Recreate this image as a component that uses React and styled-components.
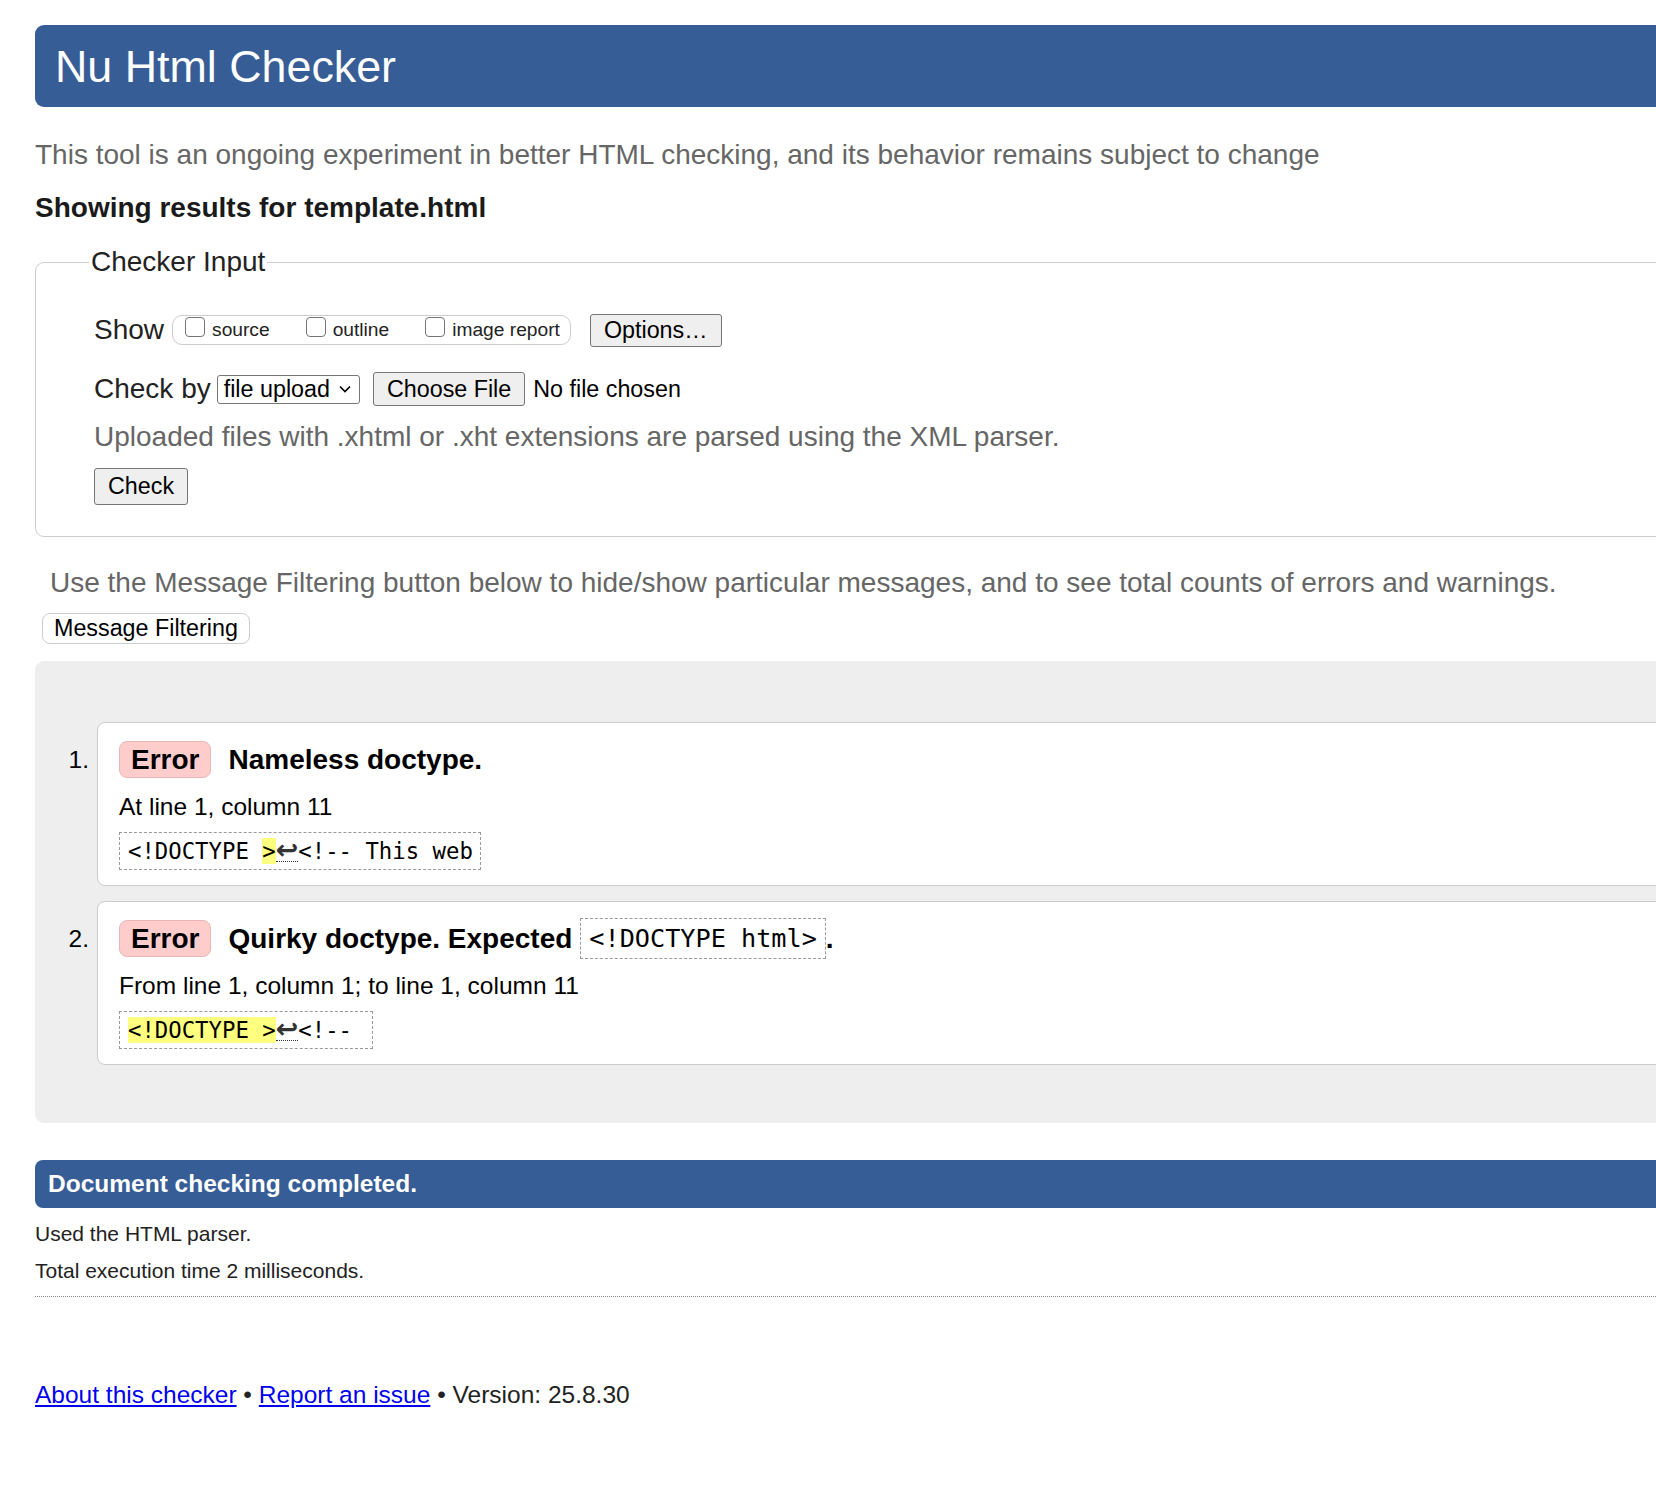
import React from 'react';
import styled, { createGlobalStyle } from 'styled-components';

const GlobalStyle = createGlobalStyle`
  html, body {
    margin: 0;
    padding: 0;
    background: #fff;
  }

  body {
    overflow-x: hidden;
    font-family: "Liberation Sans", Arial, sans-serif;
    font-size: 28px;
    color: #222;
  }
`;

const Page = styled.div`
  padding: 25px 0 60px 35px;
  margin-right: -80px;
`;

const Header = styled.h1`
  margin: 0;
  height: 82px;
  padding: 0 20px;
  line-height: 82px;
  font-size: 44.8px;
  font-weight: 400;
  color: #fff;
  background: #365d95;
  border-radius: 9px;
`;

const Note = styled.p`
  margin: ${(p) => p.$top || 0}px 0 0;
  padding-left: ${(p) => p.$indent || 0}px;
  line-height: 32px;
  color: #666;
`;

const Subtitle = styled.h2`
  margin: 21px 0 0;
  font-size: 28px;
  line-height: 32px;
  font-weight: 700;
  color: #1a1a1a;
`;

const Fieldset = styled.fieldset`
  margin: 22px 0 0;
  padding: 0 0 32px 58px;
  min-width: 0;
  border: 1px solid #ccc;
  border-radius: 9px;
`;

const Legend = styled.legend`
  margin-left: -5px;
  padding: 0 2px;
  line-height: 32px;
  color: #222;
`;

const Row = styled.div`
  display: flex;
  align-items: center;
  height: 36px;
  margin-top: ${(p) => p.$top}px;
`;

const Label = styled.span`
  margin-right: ${(p) => p.$gap || 0}px;
  line-height: 32px;
`;

const OptionGroup = styled.div`
  display: flex;
  align-items: center;
  height: 28px;
  padding: 0 10px 0 12px;
  gap: 36px;
  border: 1px solid #ccc;
  border-radius: 10px;
`;

const Option = styled.label`
  display: flex;
  align-items: center;
  gap: 7px;
  font-size: 19.2px;
  color: #222;
`;

const Box = styled.input.attrs({ type: 'checkbox' })`
  appearance: none;
  margin: 0 0 6px;
  width: 20px;
  height: 20px;
  border: 1.5px solid #767676;
  border-radius: 4px;
  background: #fff;
`;

const Button = styled.button`
  height: ${(p) => p.$h || 34}px;
  margin-left: ${(p) => p.$left || 0}px;
  padding: 0 13px;
  font-family: "Liberation Sans", Arial, sans-serif;
  font-size: 23.3px;
  color: #000;
  background: #efefef;
  border: 1px solid #767676;
  border-radius: 3px;
`;

const Select = styled.div`
  display: flex;
  align-items: center;
  gap: 9px;
  height: 29px;
  margin-left: 6px;
  padding: 0 8px 0 6px;
  box-sizing: border-box;
  font-size: 23.3px;
  color: #000;
  border: 1px solid #767676;
  border-radius: 3px;
  background: #fff;
`;

const FileNote = styled.span`
  margin-left: 8px;
  font-size: 23.3px;
  color: #000;
`;

const FilterButton = styled.button`
  display: block;
  height: 31px;
  margin: 14px 0 0 7px;
  padding: 0 11px;
  font-family: "Liberation Sans", Arial, sans-serif;
  font-size: 23.3px;
  color: #000;
  background: #fff;
  border: 1px solid #ccc;
  border-radius: 8px;
`;

const Results = styled.div`
  margin-top: 17px;
  padding: 61px 0 58px;
  background: #eee;
  border-radius: 9px;
`;

const Item = styled.div`
  display: flex;
  align-items: flex-start;
  margin-top: ${(p) => (p.$first ? 0 : 15)}px;
`;

const Number = styled.span`
  width: 54px;
  margin-right: 8px;
  padding-top: 23px;
  text-align: right;
  font-size: 24.5px;
  line-height: 30px;
  color: #000;
`;

const Card = styled.div`
  flex: 1;
  padding: 18px 0 15px 21px;
  background: #fff;
  border: 1px solid #ccc;
  border-radius: 8px;
  color: #000;
`;

const TitleRow = styled.div`
  display: flex;
  align-items: center;
  height: 37px;
`;

const Badge = styled.span`
  height: 35px;
  padding: 0 11px;
  line-height: 35px;
  font-weight: 700;
  background: #fcc;
  border: 1px solid #e6b8b8;
  border-radius: 8px;
`;

const Message = styled.span`
  margin-left: ${(p) => (p.$tight ? 0 : 17)}px;
  font-weight: 700;
  white-space: pre;
`;

const InlineCode = styled.code`
  margin-left: 8px;
  padding: 4px 8px;
  font-family: "DejaVu Sans Mono", monospace;
  font-size: 25.2px;
  font-weight: 400;
  line-height: 31px;
  border: 1px dashed #999;
`;

const Location = styled.div`
  margin-top: 14px;
  font-size: 24.5px;
  line-height: 30px;
`;

const Extract = styled.code`
  display: inline-block;
  margin-top: 10px;
  padding: 4px 7px 4px 8px;
  font-family: "DejaVu Sans Mono", monospace;
  font-size: 22.3px;
  line-height: 28px;
  white-space: pre;
  border: 1px dashed #999;
`;

const Mark = styled.mark`
  color: inherit;
  background: #ffff80;
`;

const LineFeed = styled.span`
  display: inline-block;
  line-height: 22px;
  font-family: "DejaVu Sans", sans-serif;
  font-size: 27px;
  font-weight: 700;
  color: #333;
  border-bottom: 1px dotted #333;
`;

const Banner = styled.div`
  margin-top: 37px;
  height: 48px;
  padding-left: 13px;
  line-height: 48px;
  font-size: 24.5px;
  font-weight: 700;
  color: #fff;
  background: #365d95;
  border-radius: 8px;
`;

const Detail = styled.p`
  margin: ${(p) => p.$top}px 0 0;
  font-size: 21px;
  line-height: 26px;
  color: #222;
`;

const Rule = styled.hr`
  margin: 12px 0 0;
  border: 0;
  border-top: 1px dotted #888;
`;

const Footer = styled.p`
  margin: 83px 0 0;
  font-size: 24.5px;
  line-height: 30px;
  color: #222;
`;

const Link = styled.a`
  color: #00e;
  text-decoration: underline;
`;

const Chevron = () => (
  <svg width="12" height="8" viewBox="0 0 12 8" fill="none">
    <path d="M1 1.5 L6 6.5 L11 1.5" stroke="#000" strokeWidth="1.6" />
  </svg>
);

const App = () => (
  <>
    <GlobalStyle />
    <Page>
      <Header>Nu Html Checker</Header>
      <Note $top={32}>
        This tool is an ongoing experiment in better HTML checking, and its behavior remains subject to change
      </Note>
      <Subtitle>Showing results for template.html</Subtitle>

      <Fieldset>
        <Legend>Checker Input</Legend>
        <Row $top={34}>
          <Label $gap={8}>Show</Label>
          <OptionGroup>
            <Option>
              <Box />
              source
            </Option>
            <Option>
              <Box />
              outline
            </Option>
            <Option>
              <Box />
              image report
            </Option>
          </OptionGroup>
          <Button $left={19} $h={33}>Options…</Button>
        </Row>
        <Row $top={23}>
          <Label>Check by</Label>
          <Select>
            file upload
            <Chevron />
          </Select>
          <Button $left={13}>Choose File</Button>
          <FileNote>No file chosen</FileNote>
        </Row>
        <Note $top={14}>Uploaded files with .xhtml or .xht extensions are parsed using the XML parser.</Note>
        <Row $top={15}>
          <Button $h={37}>Check</Button>
        </Row>
      </Fieldset>

      <Note $top={30} $indent={15}>
        Use the Message Filtering button below to hide/show particular messages, and to see total counts of errors and warnings.
      </Note>
      <FilterButton>Message Filtering</FilterButton>

      <Results>
        <Item $first>
          <Number>1.</Number>
          <Card>
            <TitleRow>
              <Badge>Error</Badge>
              <Message>Nameless doctype.</Message>
            </TitleRow>
            <Location>At line 1, column 11</Location>
            <Extract>
              {'<!DOCTYPE '}
              <Mark>&gt;</Mark>
              <LineFeed>↩</LineFeed>
              {'<!-- This web'}
            </Extract>
          </Card>
        </Item>
        <Item>
          <Number>2.</Number>
          <Card>
            <TitleRow>
              <Badge>Error</Badge>
              <Message>Quirky doctype. Expected</Message>
              <InlineCode>{'<!DOCTYPE html>'}</InlineCode>
              <Message $tight>.</Message>
            </TitleRow>
            <Location>From line 1, column 1; to line 1, column 11</Location>
            <Extract>
              <Mark>{'<!DOCTYPE >'}</Mark>
              <LineFeed>↩</LineFeed>
              {'<!-- '}
            </Extract>
          </Card>
        </Item>
      </Results>

      <Banner>Document checking completed.</Banner>
      <Detail $top={13}>Used the HTML parser.</Detail>
      <Detail $top={11}>Total execution time 2 milliseconds.</Detail>
      <Rule />
      <Footer>
        <Link href="#about">About this checker</Link> • <Link href="#issue">Report an issue</Link> • Version: 25.8.30
      </Footer>
    </Page>
  </>
);

export default App;
